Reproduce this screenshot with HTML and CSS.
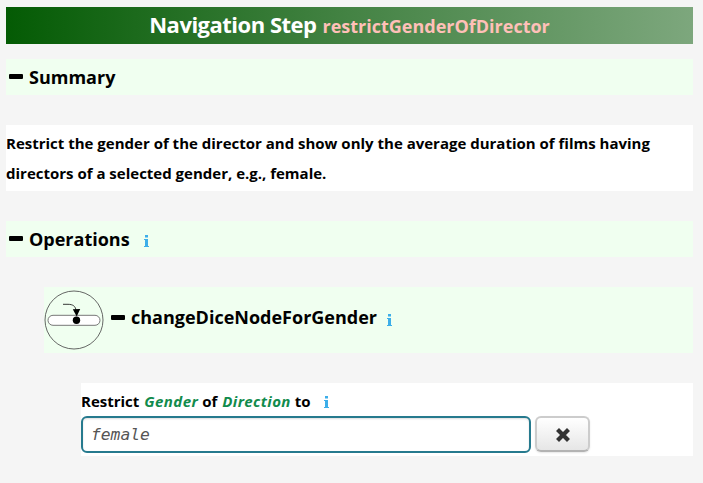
FILE: index.html
```html
<!DOCTYPE html>
<html lang="en">
<head>
<meta charset="utf-8">
<title>Navigation Step</title>
<link rel="stylesheet" href="styles.css">
</head>
<body>
<main>
  <h1 class="title"><span class="title-kind">Navigation Step</span><span class="title-name">restrictGenderOfDirector</span></h1>
  <h2 class="bar"><span class="minus"></span><span>Summary</span></h2>
  <p class="description">Restrict the gender of the director and show only the average duration of films having directors of a selected gender, e.g., female.</p>
  <h2 class="bar"><span class="minus"></span><span>Operations</span>
    <svg class="info" viewBox="0 0 5 12"><path d="M1 0h3v2.500H1zM0 4h4v7h1v1H0v-1h1V5H0z"/></svg></h2>
  <section class="operation">
    <h3 class="bar operation-bar">
      <svg class="dice" viewBox="0 0 60 60">
        <circle cx="30" cy="30" r="29" fill="none" stroke="#555" stroke-width=".9"/>
        <rect x="4" y="25.300" width="52" height="10" rx="5" fill="#fff" stroke="#777" stroke-width="1"/>
        <path d="M19 14.300h5c5 0 7.500 2 8 6" fill="none" stroke="#222" stroke-width=".9"/>
        <path d="M28.800 19.200l7.400-.1-3.500 7.300z"/>
        <circle cx="32.500" cy="30.200" r="3.700"/>
      </svg>
      <span class="minus"></span><span class="operation-name">changeDiceNodeForGender</span>
      <svg class="info" viewBox="0 0 5 12"><path d="M1 0h3v2.500H1zM0 4h4v7h1v1H0v-1h1V5H0z"/></svg>
    </h3>
    <div class="binding">
      <label class="binding-label" for="gender"><span>Restrict</span><em>Gender</em><span>of</span><em>Direction</em><span>to</span>
        <svg class="info" viewBox="0 0 5 12"><path d="M1 0h3v2.500H1zM0 4h4v7h1v1H0v-1h1V5H0z"/></svg></label>
      <div class="controls">
        <input id="gender" class="value" type="text" value="female">
        <button class="clear" type="button" aria-label="Clear"><svg viewBox="0 0 14 14"><path d="M3 3l8 8M11 3l-8 8"/></svg></button>
      </div>
    </div>
  </section>
</main>
</body>
</html>
```
FILE: styles.css
```css
* { box-sizing: border-box; }
body {
  margin: 0;
  background: #f5f5f5;
  color: #000;
  font: 700 15px/30px "Open Sans", sans-serif;
}
main { padding: 7px 10px 0 6px; }
h1, h2, h3, p { margin: 0; }
.title {
  display: flex;
  justify-content: center;
  align-items: baseline;
  gap: 6px;
  height: 37px;
  margin-bottom: 15px;
  background: linear-gradient(to right, #045b04, #448344 50%, #7da77d);
  color: #fff;
  font-size: 22px;
  font-weight: 700;
  line-height: 35px;
  white-space: nowrap;
}
.title-kind { letter-spacing: -.5px; }
.title-name { color: #ffc0b8; font-size: 18px; }
.bar {
  display: flex;
  align-items: center;
  height: 36px;
  padding-left: 3px;
  margin-bottom: 30px;
  background: #f0fff0;
  font-size: 18px;
  font-weight: 700;
  line-height: 36px;
}
.minus {
  flex: none;
  width: 14px;
  height: 5px;
  margin: -1px 6px 0 0;
  border-radius: 1px;
  background: #000;
}
.info { flex: none; width: 5px; height: 12px; margin: 4px 0 0 14px; fill: #3daee9; }
.description {
  height: 66px;
  padding-top: 3px;
  margin-bottom: 30px;
  background: #fff;
}
.operation { padding-left: 38px; }
.operation-bar { height: 66px; padding-left: 0; }
.operation-bar .minus { margin-top: -5px; }
.operation-bar .info { margin: 0 0 0 10px; }
.operation-name { margin-top: -6px; }
.dice { width: 60px; height: 60px; margin-right: 7px; }
.binding { height: 73px; margin-left: 37px; padding-top: 3px; background: #fff; }
.binding-label { display: flex; align-items: center; gap: 4px; height: 30px; }
.binding-label em { margin-left: 1px; color: #118b4c; letter-spacing: .4px; }
.binding-label .info { margin: 2px 0 0 9px; }
.controls { display: flex; gap: 4px; }
.value {
  width: 450px;
  height: 37px;
  padding: 0 8px;
  border: 2px solid #267a8e;
  border-radius: 6px;
  background: #fff;
  color: #555;
  box-shadow: inset 0 1px 2px #ddd;
  font: italic 16.300px "DejaVu Sans Mono", monospace;
  outline: 0;
}
.clear {
  display: flex;
  align-items: center;
  justify-content: center;
  width: 55px;
  height: 36px;
  padding: 2px 0 0;
  border: 2px solid #ccc;
  border-bottom-color: #b3b3b3;
  border-radius: 6px;
  background: linear-gradient(#fff, #e6e6e6);
  box-shadow: 0 1px 2px rgba(0, 0, 0, .1);
}
.clear svg { width: 14px; height: 14px; fill: none; stroke: #333; stroke-width: 4.200; stroke-linecap: square; }
```
